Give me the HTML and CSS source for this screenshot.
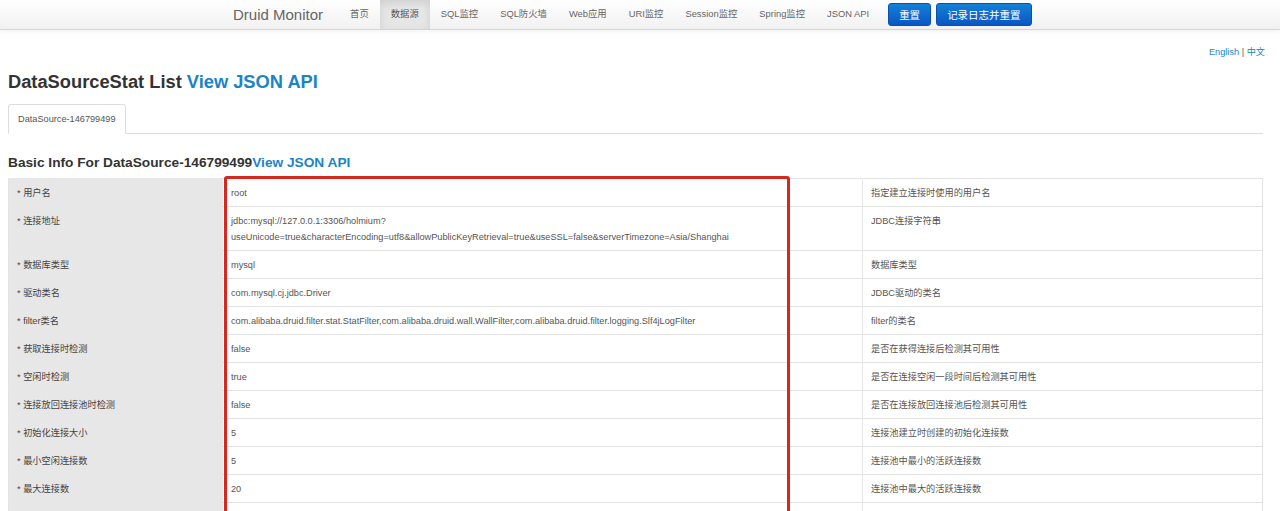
FILE: index.html
```html
<!DOCTYPE html>
<html lang="zh-CN">
<head>
  <meta charset="UTF-8">
  <meta name="viewport" content="width=device-width, initial-scale=1.0">
  <title>Druid Monitor - DataSource</title>
  <link rel="stylesheet" href="styles.css">
</head>
<body>
  <!-- Top navbar -->
  <div class="navbar">
    <div class="nav-container">
      <a class="brand" href="#">Druid Monitor</a>
      <ul class="nav">
        <li><a href="#">首页</a></li>
        <li class="active"><a href="#">数据源</a></li>
        <li><a href="#">SQL监控</a></li>
        <li><a href="#">SQL防火墙</a></li>
        <li><a href="#">Web应用</a></li>
        <li><a href="#">URI监控</a></li>
        <li><a href="#">Session监控</a></li>
        <li><a href="#">Spring监控</a></li>
        <li><a href="#">JSON API</a></li>
      </ul>
      <div class="nav-buttons">
        <button class="btn-primary">重置</button>
        <button class="btn-primary">记录日志并重置</button>
      </div>
    </div>
  </div>

  <div class="content">
    <div class="lang"><a href="#">English</a> | <a href="#">中文</a></div>

    <h3 class="page-title">DataSourceStat List <a href="#">View JSON API</a></h3>

    <ul class="tabs">
      <li class="active"><a href="#">DataSource-146799499</a></li>
    </ul>

    <h4 class="section-title">Basic Info For DataSource-146799499<a href="#">View JSON API</a></h4>

    <div class="table-wrap">
      <table class="info-table">
        <colgroup>
          <col class="col-label">
          <col class="col-value">
          <col class="col-desc">
        </colgroup>
        <tbody>
          <tr><td class="label">* 用户名</td><td>root</td><td>指定建立连接时使用的用户名</td></tr>
          <tr><td class="label">* 连接地址</td><td>jdbc:mysql://127.0.0.1:3306/holmium?<br>useUnicode=true&amp;characterEncoding=utf8&amp;allowPublicKeyRetrieval=true&amp;useSSL=false&amp;serverTimezone=Asia/Shanghai</td><td>JDBC连接字符串</td></tr>
          <tr><td class="label">* 数据库类型</td><td>mysql</td><td>数据库类型</td></tr>
          <tr><td class="label">* 驱动类名</td><td>com.mysql.cj.jdbc.Driver</td><td>JDBC驱动的类名</td></tr>
          <tr><td class="label">* filter类名</td><td>com.alibaba.druid.filter.stat.StatFilter,com.alibaba.druid.wall.WallFilter,com.alibaba.druid.filter.logging.Slf4jLogFilter</td><td>filter的类名</td></tr>
          <tr><td class="label">* 获取连接时检测</td><td>false</td><td>是否在获得连接后检测其可用性</td></tr>
          <tr><td class="label">* 空闲时检测</td><td>true</td><td>是否在连接空闲一段时间后检测其可用性</td></tr>
          <tr><td class="label">* 连接放回连接池时检测</td><td>false</td><td>是否在连接放回连接池后检测其可用性</td></tr>
          <tr><td class="label">* 初始化连接大小</td><td>5</td><td>连接池建立时创建的初始化连接数</td></tr>
          <tr><td class="label">* 最小空闲连接数</td><td>5</td><td>连接池中最小的活跃连接数</td></tr>
          <tr><td class="label">* 最大连接数</td><td>20</td><td>连接池中最大的活跃连接数</td></tr>
          <tr><td class="label">* 查询超时时间</td><td>0</td><td>查询超时时间</td></tr>
        </tbody>
      </table>
      <!-- red annotation box drawn over the value column -->
      <div class="highlight"></div>
    </div>
  </div>
</body>
</html>
```

FILE: styles.css
```css
body {
  margin: 0;
  font-family: "Liberation Sans", "Noto Sans CJK SC", sans-serif;
  font-size: 9.2px;
  color: #333;
  background: #fff;
  overflow: hidden;
}

a {
  color: #1b84c6;
  text-decoration: none;
}

/* Navbar */
.navbar {
  height: 29px;
  background: linear-gradient(#ffffff, #f1f1f1);
  border-bottom: 1px solid #d6d6d6;
  box-shadow: 0 1px 4px rgba(0, 0, 0, 0.07);
}

.nav-container {
  margin-left: 233px;
  display: flex;
  align-items: center;
  height: 29px;
  white-space: nowrap;
}

.brand {
  font-size: 15px;
  color: #666;
  padding-right: 16px;
  line-height: 29px;
}

.nav {
  list-style: none;
  margin: 0;
  padding: 0;
  display: flex;
  height: 29px;
  font-size: 9.35px;
}

.nav li a {
  display: block;
  padding: 0 11px;
  line-height: 29px;
  color: #666;
}

.nav li.active a {
  background: #e6e6e6;
  color: #555;
  box-shadow: inset 0 3px 8px rgba(0, 0, 0, 0.1);
}

.nav-buttons {
  display: flex;
  gap: 5px;
  margin-left: 8px;
}

.btn-primary {
  font-family: "Liberation Sans", "Noto Sans CJK SC", sans-serif;
  font-size: 10.5px;
  color: #fff;
  height: 23px;
  padding: 0 10px;
  border: 1px solid #0a4fb0;
  border-radius: 3px;
  background: linear-gradient(#1281d6, #0a56c4);
  white-space: nowrap;
  cursor: pointer;
}

/* Content */
.content {
  padding: 0 15px 0 8px;
}

.lang {
  text-align: right;
  margin-top: 15px;
  line-height: 14px;
  color: #555;
}

.page-title {
  margin: 11px 0 0;
  font-size: 18.3px;
  line-height: 24px;
  color: #333;
}

.tabs {
  list-style: none;
  margin: 10px 2px 0 0;
  padding: 0;
  display: flex;
  border-bottom: 1px solid #ddd;
}

.tabs li a {
  display: block;
  padding: 0 9px;
  line-height: 28px;
  color: #555;
  border: 1px solid transparent;
  margin-bottom: -1px;
}

.tabs li.active a {
  border-color: #ddd #ddd transparent;
  border-radius: 3px 3px 0 0;
  background: #fff;
}

.section-title {
  margin: 20px 0 0;
  font-size: 13.7px;
  line-height: 18px;
  color: #333;
}

.table-wrap {
  position: relative;
  margin-top: 6px;
  margin-right: 2px;
}

.info-table {
  width: 100%;
  border-collapse: collapse;
  table-layout: fixed;
  border: 1px solid #e3e3e3;
}

.col-label { width: 214px; }
.col-value { width: 640px; }

.info-table td {
  padding: 6px 8px 5px;
  line-height: 16px;
  border-top: 1px solid #e3e3e3;
  vertical-align: top;
  color: #555;
}

.info-table td + td {
  border-left: 1px solid #e8e8e8;
}

.info-table td.label {
  background: #e7e7e7;
  border-top-color: #e7e7e7;
  color: #444;
}

.highlight {
  position: absolute;
  left: 216px;
  top: -2px;
  width: 560px;
  height: 420px;
  border: 3px solid #d6281f;
  border-radius: 3px;
}
```
